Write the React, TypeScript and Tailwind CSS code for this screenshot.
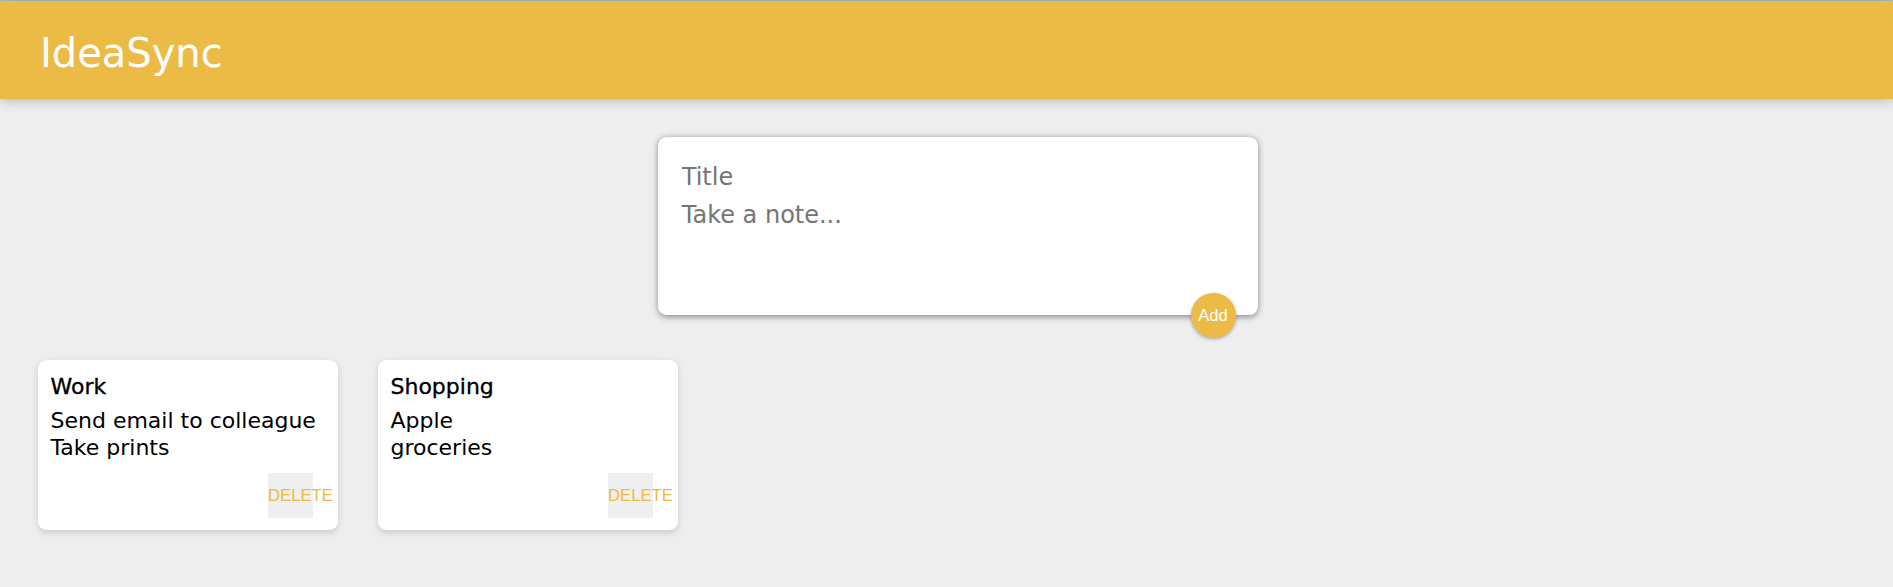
import React from 'react';

interface Note {
    id: number;
    title: string;
    lines: string[];
}

const notes: Note[] = [
    { id: 1, title: 'Work', lines: ['Send email to colleague', 'Take prints'] },
    { id: 2, title: 'Shopping', lines: ['Apple', 'groceries'] },
];

const NoteCard: React.FC<{ note: Note }> = ({ note }) => {
    return (
        <div className="w-[300px] bg-white rounded-[8.75px] px-[12.5px] pt-[13.5px] pb-[12.5px] shadow-[0_2.5px_6.25px_#cccccc] flex flex-col">
            <h1 className="text-[22px] leading-[26.8px] mb-[7.5px] text-black [-webkit-text-stroke:0.35px_black]">{note.title}</h1>
            <p className="text-[22px] leading-[26.8px] mb-[11.5px] text-black">
                {note.lines.map((line, i) => (
                    <span key={i} className="block">{line}</span>
                ))}
            </p>
            <div className="flex justify-end pr-[12.5px]">
                <button className="w-[45px] h-[45px] bg-[#efefef] text-[#edba45] flex items-center justify-start p-0 overflow-visible whitespace-nowrap font-['Liberation_Sans',Arial,sans-serif] text-[16.67px]">
                    DELETE
                </button>
            </div>
        </div>
    );
};

const CreateArea: React.FC = () => {
    return (
        <div className="flex justify-center pl-[23px] mt-[38px] mb-[25px]">
            <form className="relative w-[600px] h-[178px] bg-white rounded-[8.75px] p-[18.75px] shadow-[0_1.25px_6.25px_rgb(138,137,137)] flex flex-col">
                <input
                    name="title"
                    placeholder="Title"
                    className="block w-full h-[40px] px-[5px] pt-[6px] pb-[4px] border-none outline-none text-[24px] leading-[29px] placeholder:text-[#757575] bg-transparent"
                />
                <textarea
                    name="content"
                    placeholder="Take a note..."
                    rows={3}
                    className="block w-full h-[100px] p-[5px] border-none outline-none resize-none text-[24px] leading-[29px] placeholder:text-[#757575] bg-transparent"
                />
                <button
                    type="button"
                    className="absolute right-[22.5px] bottom-[-22.5px] w-[45px] h-[45px] rounded-full bg-[#ecbb46] text-white shadow-[0_1.25px_3.75px_rgba(0,0,0,0.3)] font-['Liberation_Sans',Arial,sans-serif] text-[16.67px] flex items-center justify-center"
                >
                    Add
                </button>
            </form>
        </div>
    );
};

export default function App() {
    return (
        <div className="min-h-screen bg-[#eeeeee] font-['DejaVu_Sans',sans-serif] border-t border-[#a6cfd9]">
            <header className="h-[98px] bg-[#ecbb46] px-[40px] pt-[32px] shadow-[0_0_12.5px_rgba(0,0,0,0.3)] relative z-10">
                <h1 className="text-white text-[40px] leading-[40px] font-normal">IdeaSync</h1>
            </header>
            <CreateArea />
            <div className="flex gap-[40px] pl-[38px] pt-[20px] items-start">
                {notes.map((note) => (
                    <NoteCard key={note.id} note={note} />
                ))}
            </div>
        </div>
    );
}
